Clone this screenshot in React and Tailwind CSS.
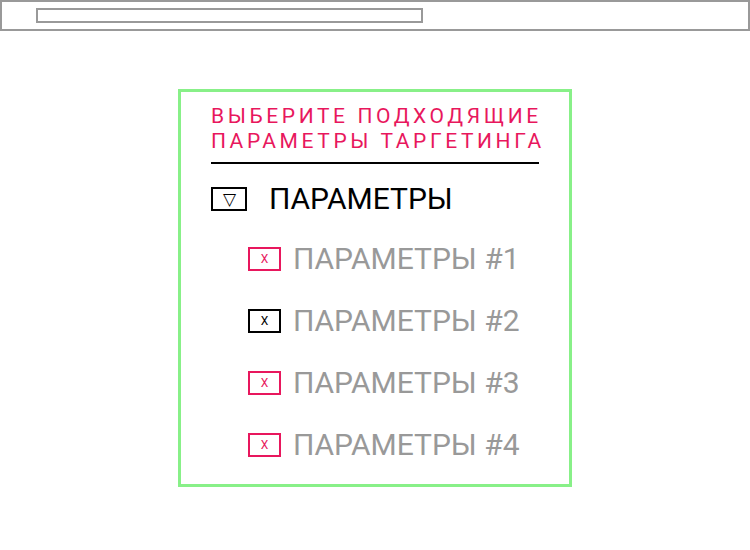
import React from 'react';

const items = [
  { label: 'ПАРАМЕТРЫ #1', active: true },
  { label: 'ПАРАМЕТРЫ #2', active: false },
  { label: 'ПАРАМЕТРЫ #3', active: true },
  { label: 'ПАРАМЕТРЫ #4', active: true },
];

const App = () => {
  return (
    <div className="w-[750px] h-[550px] bg-white font-['Roboto',sans-serif] overflow-hidden">
      {/* Top bar */}
      <div className="h-[31px] border-2 border-[#999999] pl-[34px] pt-[6px]">
        <div className="w-[387px] h-[15px] border-2 border-[#999999]"></div>
      </div>

      {/* Targeting card */}
      <div className="ml-[178px] mt-[58px] w-[394px] h-[398px] border-[3px] border-[#88f088] pl-[30px] pr-[30px] pt-[12px]">
        <h2 className="text-[#e8175d] text-[21px] leading-[25px] tracking-[3.6px] font-normal whitespace-nowrap">
          ВЫБЕРИТЕ ПОДХОДЯЩИЕ<br />ПАРАМЕТРЫ ТАРГЕТИНГА
        </h2>
        <div className="mt-[8px] w-[328px] h-[2px] bg-black"></div>

        <div className="mt-[20px] flex items-center h-[30px]">
          <div className="w-[36px] h-[24px] border-2 border-black flex items-center justify-center text-[17px] leading-none text-black">
            ▽
          </div>
          <span className="ml-[22px] text-[30px] leading-[30px] text-black">ПАРАМЕТРЫ</span>
        </div>

        <div className="mt-[33px] ml-[37px] flex flex-col gap-[38px]">
          {items.map((item) => (
            <div key={item.label} className="flex items-center h-[24px]">
              <div
                className={
                  item.active
                    ? 'w-[33px] h-[24px] border-2 border-[#e8175d] text-[#e8175d] flex items-center justify-center text-[12px] leading-none'
                    : 'w-[33px] h-[24px] border-2 border-black text-black flex items-center justify-center text-[12px] leading-none'
                }
              >
                X
              </div>
              <span className="ml-[12px] text-[30px] leading-[30px] text-[#999999]">{item.label}</span>
            </div>
          ))}
        </div>
      </div>
    </div>
  );
};

export default App;
